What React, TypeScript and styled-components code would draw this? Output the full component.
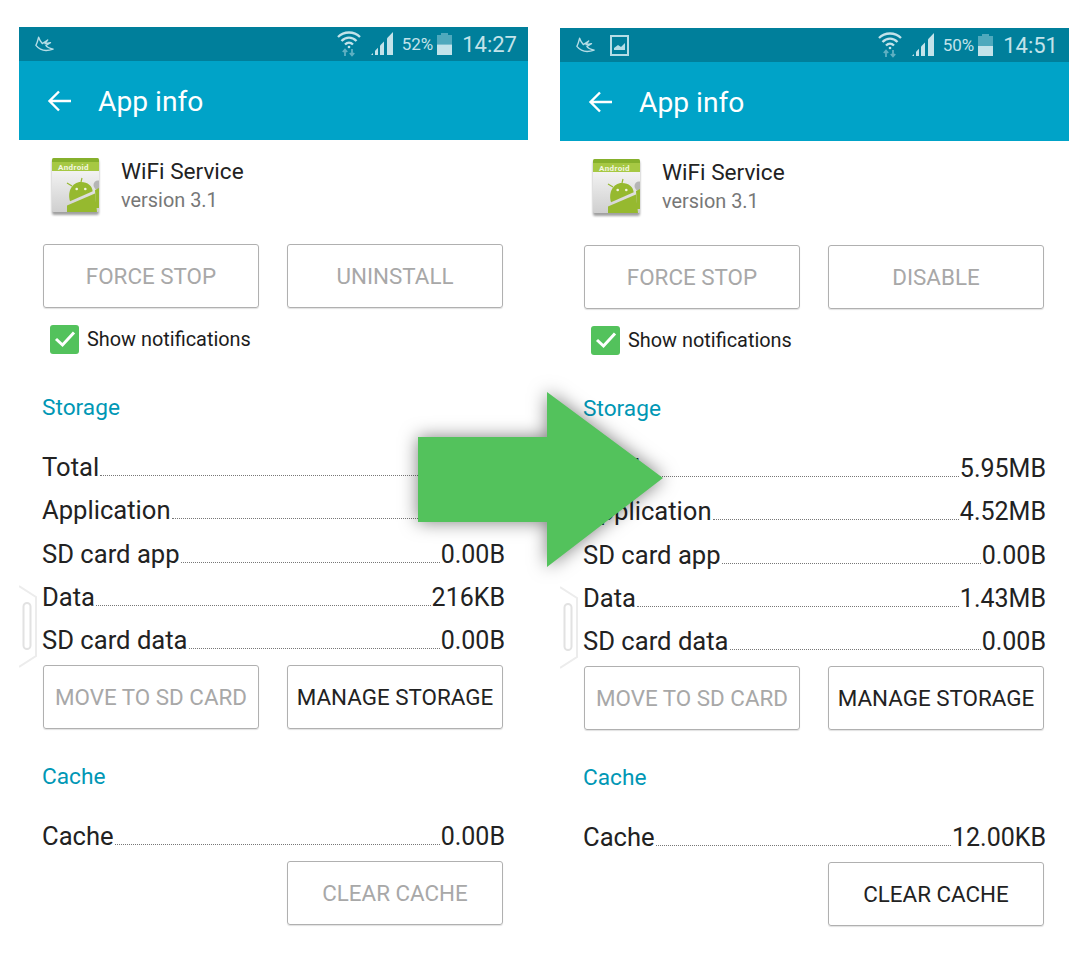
import React from 'react';
import styled, { createGlobalStyle } from 'styled-components';

const GlobalStyle = createGlobalStyle`
  html, body {
    margin: 0;
    padding: 0;
    background: #fff;
    font-family: Roboto, "Liberation Sans", sans-serif;
  }
`;

type PhoneData = {
  batteryText: string;
  battery: number;
  time: string;
  hasGalleryIcon?: boolean;
  secondButton: string;
  sizes: string[];
  cache: string;
  cacheEnabled?: boolean;
  offset: number;
};

const phones: PhoneData[] = [
  {
    batteryText: '52%',
    battery: 52,
    time: '14:27',
    secondButton: 'UNINSTALL',
    sizes: ['5.95MB', '4.52MB', '0.00B', '216KB', '0.00B'],
    cache: '0.00B',
    offset: 0,
  },
  {
    batteryText: '50%',
    battery: 50,
    time: '14:51',
    hasGalleryIcon: true,
    secondButton: 'DISABLE',
    sizes: ['5.95MB', '4.52MB', '0.00B', '1.43MB', '0.00B'],
    cache: '12.00KB',
    cacheEnabled: true,
    offset: 1,
  },
];

const rowLabels = ['Total', 'Application', 'SD card app', 'Data', 'SD card data'];

const SwallowIcon = () => (
  <svg width="20" height="17" viewBox="0 0 22 18" fill="none" stroke="#b5dde6" strokeWidth="1.5" strokeLinejoin="round">
    <path d="M4 1 C3 5 2 8 1 10 C5 15 12 17 20 14 C15 13 13 12 12 10 L17 7 L11 8 L14 4 L8 8 C6 6 5 4 4 1 Z" />
  </svg>
);

const GalleryIcon = () => (
  <svg width="19" height="21" viewBox="0 0 19 21">
    <rect x="1" y="1" width="17" height="19" fill="none" stroke="#b5dde6" strokeWidth="2" />
    <path d="M4 15 L4 13 L8 10 L11 12 L15 8 L15 15 Z" fill="#b5dde6" />
  </svg>
);

const WifiIcon = () => (
  <svg width="24" height="26" viewBox="0 0 24 26" fill="none" stroke="#c3e3ea" strokeWidth="2.3">
    <path d="M1 6 C7 0 17 0 23 6" />
    <path d="M4.5 10 C9 5.5 15 5.5 19.5 10" />
    <path d="M8 13.5 C10.5 11 13.5 11 16 13.5" />
    <circle cx="12" cy="16" r="1.3" fill="#c3e3ea" stroke="none" />
    <path d="M8 25 V19 M5.8 21 L8 18.6 L10.2 21" stroke="#5fb0c2" strokeWidth="1.8" />
    <path d="M15 18 V24 M12.8 22 L15 24.4 L17.2 22" stroke="#5fb0c2" strokeWidth="1.8" />
  </svg>
);

const SignalIcon = () => (
  <svg width="25" height="24" viewBox="0 0 25 24" fill="#c3e3ea">
    <polygon points="1,23 3,21 3,23" />
    <polygon points="5,18.8 8,15.7 8,23 5,23" />
    <polygon points="10,13.6 14,9.4 14,23 10,23" />
    <polygon points="17,6.3 23,0 23,23 17,23" />
  </svg>
);

const BatteryIcon = ({ level }: { level: number }) => (
  <svg width="15" height="22" viewBox="0 0 15 22">
    <rect x="4" y="0" width="7" height="3" fill="#4fa9bd" />
    <rect x="0" y="2" width="15" height="20" fill="#4fa9bd" />
    <rect x="0" y={22 - (20 * level) / 100} width="15" height={(20 * level) / 100} fill="#c3e3ea" />
  </svg>
);

const BackIcon = () => (
  <svg width="24" height="24" viewBox="0 0 24 24" fill="none" stroke="#fff" strokeWidth="2.4">
    <path d="M24 12 H2.5 M12 2.5 L2.5 12 L12 21.5" />
  </svg>
);

const AndroidAppIcon = () => (
  <svg width="52" height="60" viewBox="0 0 52 60">
    <defs>
      <linearGradient id="paper" x1="0" y1="0" x2="0" y2="1">
        <stop offset="0" stopColor="#fdfdfd" />
        <stop offset="1" stopColor="#cfcfcf" />
      </linearGradient>
      <clipPath id="iconClip">
        <rect x="2" y="0" width="47" height="54" rx="1.5" />
      </clipPath>
      <filter id="iconShadow" x="-20%" y="-20%" width="140%" height="140%">
        <feGaussianBlur stdDeviation="1.2" />
      </filter>
    </defs>
    <rect x="2" y="2" width="47" height="55" rx="2" fill="#555" opacity="0.55" filter="url(#iconShadow)" />
    <g clipPath="url(#iconClip)">
      <rect x="2" y="0" width="47" height="54" fill="url(#paper)" />
      <rect x="2" y="0" width="47" height="4" fill="#86b02c" />
      <rect x="2" y="4" width="47" height="9" fill="#a6c843" />
      <text x="8" y="11.5" fontSize="8" fontWeight="700" letterSpacing="0.4" fill="#f3f7e2" fontFamily="Roboto, sans-serif">Android</text>
      <circle cx="48" cy="27" r="4.5" fill="#b5b5b5" />
      <path d="M22 28 L17 25 M31 24 L32 20" stroke="#96b92f" strokeWidth="1.2" />
      <path d="M20 43.3 C17 34 22 24 31 24 C38 24 42 28 42.7 33.3 Z" fill="#96b92f" />
      <circle cx="26.7" cy="31" r="1.3" fill="#f2f5df" />
      <circle cx="35.3" cy="31" r="1.3" fill="#f2f5df" />
      <polygon points="17,47.5 45,35.5 47,54 17,54" fill="#96b92f" />
      <polygon points="45,32 49,30 49,50 46,50" fill="#96b92f" />
    </g>
  </svg>
);

const SideHandle = () => (
  <svg width="20" height="86" viewBox="0 0 20 86" fill="none">
    <path d="M0 1 L17 12 V71 L0 82" stroke="#ececec" strokeWidth="2" />
    <rect x="4.5" y="18" width="7" height="46" rx="3.5" stroke="#e2e2e2" strokeWidth="2" />
  </svg>
);

const Phone: React.FC<{ data: PhoneData }> = ({ data }) => (
  <PhoneFrame $offset={data.offset}>
    <StatusBar>
      <StatusLeft>
        <SwallowIcon />
        {data.hasGalleryIcon && <GalleryIcon />}
      </StatusLeft>
      <StatusRight>
        <WifiIcon />
        <SignalIcon />
        <BatteryText>{data.batteryText}</BatteryText>
        <BatteryIcon level={data.battery} />
        <ClockText>{data.time}</ClockText>
      </StatusRight>
    </StatusBar>
    <Header>
      <BackIcon />
      <HeaderTitle>App info</HeaderTitle>
    </Header>
    <HandleSlot>
      <SideHandle />
    </HandleSlot>
    <Content>
      <AppRow>
        <AndroidAppIcon />
        <AppText>
          <AppName>WiFi Service</AppName>
          <AppVersion>version 3.1</AppVersion>
        </AppText>
      </AppRow>
      <ButtonRow>
        <OutlineButton>FORCE STOP</OutlineButton>
        <OutlineButton>{data.secondButton}</OutlineButton>
      </ButtonRow>
      <NotifyRow>
        <CheckBox>
          <svg width="22" height="18" viewBox="0 0 22 18" fill="none" stroke="#fff" strokeWidth="3">
            <path d="M2 9 L8.5 15 L20 2.5" />
          </svg>
        </CheckBox>
        <NotifyText>Show notifications</NotifyText>
      </NotifyRow>
      <SectionTitle>Storage</SectionTitle>
      <Rows>
        {rowLabels.map((label, i) => (
          <Row key={label}>
            <span>{label}</span>
            <Dots />
            <RowValue>{data.sizes[i]}</RowValue>
          </Row>
        ))}
      </Rows>
      <ButtonRow $tight>
        <OutlineButton>MOVE TO SD CARD</OutlineButton>
        <OutlineButton $active>MANAGE STORAGE</OutlineButton>
      </ButtonRow>
      <SectionTitle $cache>Cache</SectionTitle>
      <Rows>
        <Row>
          <span>Cache</span>
          <Dots />
          <RowValue>{data.cache}</RowValue>
        </Row>
      </Rows>
      <CacheButtonRow>
        <OutlineButton $active={data.cacheEnabled}>CLEAR CACHE</OutlineButton>
      </CacheButtonRow>
    </Content>
  </PhoneFrame>
);

const App: React.FC = () => (
  <Page>
    <GlobalStyle />
    {phones.map((p) => (
      <Phone key={p.time} data={p} />
    ))}
    <BigArrow width="285" height="215" viewBox="0 0 285 215">
      <polygon points="20,65 149,65 149,20 265,106 149,195 149,150 20,150" fill="#53c25c" />
    </BigArrow>
  </Page>
);

const Page = styled.div`
  position: relative;
  width: 1080px;
  height: 960px;
  box-sizing: border-box;
  padding: 27px 0 0 19px;
  display: flex;
  align-items: flex-start;
  gap: 32px;
  overflow: hidden;
`;

const PhoneFrame = styled.div<{ $offset: number }>`
  position: relative;
  width: 509px;
  margin-top: ${(p) => p.$offset}px;
  flex-shrink: 0;
`;

const StatusBar = styled.div`
  height: 34px;
  background: #007f9b;
  display: flex;
  align-items: center;
  justify-content: space-between;
  padding: 0 11px 0 16px;
`;

const StatusLeft = styled.div`
  display: flex;
  align-items: center;
  gap: 14px;
`;

const StatusRight = styled.div`
  display: flex;
  align-items: center;
  color: #c3e3ea;

  svg:nth-child(2) {
    margin-left: 9px;
  }
`;

const BatteryText = styled.span`
  font-size: 17px;
  margin: 0 4px 0 7px;
`;

const ClockText = styled.span`
  font-size: 22px;
  margin-left: 10px;
`;

const Header = styled.div`
  height: 79px;
  background: #00a3c8;
  display: flex;
  align-items: center;
  padding-left: 28px;
  box-sizing: border-box;
`;

const HeaderTitle = styled.div`
  color: #fff;
  font-size: 28.2px;
  line-height: 34px;
  padding-top: 2px;
  margin-left: 27px;
`;

const HandleSlot = styled.div`
  position: absolute;
  left: 0;
  top: 558px;
`;

const Content = styled.div`
  padding: 18px 23px 0 23px;
`;

const AppRow = styled.div`
  display: flex;
  padding-left: 8px;
  height: 60px;
`;

const AppText = styled.div`
  margin-left: 19px;
`;

const AppName = styled.div`
  font-size: 22.6px;
  line-height: 28px;
  color: #222;
`;

const AppVersion = styled.div`
  font-size: 19.9px;
  line-height: 30px;
  color: #777;
`;

const ButtonRow = styled.div<{ $tight?: boolean }>`
  display: flex;
  gap: 28px;
  padding: 0 2px 0 1px;
  margin-top: ${(p) => (p.$tight ? '3px' : '26px')};
`;

const CacheButtonRow = styled.div`
  display: flex;
  justify-content: flex-end;
  padding-right: 2px;
  margin-top: 2px;
`;

const OutlineButton = styled.div<{ $active?: boolean }>`
  width: 216px;
  height: 64px;
  box-sizing: border-box;
  border: 1px solid #b0b0b0;
  border-radius: 3px;
  box-shadow: 0 1px 1px rgba(0, 0, 0, 0.12);
  display: flex;
  align-items: center;
  justify-content: center;
  font-size: 22.4px;
  white-space: nowrap;
  color: ${(p) => (p.$active ? '#222' : '#a8a8a8')};
`;

const NotifyRow = styled.div`
  display: flex;
  align-items: center;
  height: 30px;
  margin: 16px 0 0 8px;
`;

const CheckBox = styled.div`
  width: 29px;
  height: 29px;
  border-radius: 3px;
  background: #53c25c;
  display: flex;
  align-items: center;
  justify-content: center;
`;

const NotifyText = styled.div`
  font-size: 19.9px;
  color: #1c1c1c;
  margin-left: 8px;
`;

const SectionTitle = styled.div<{ $cache?: boolean }>`
  font-size: 22.7px;
  line-height: 28px;
  color: #0097b5;
  margin-top: ${(p) => (p.$cache ? '34px' : '40px')};
`;

const Rows = styled.div`
  margin-top: 24px;
`;

const Row = styled.div`
  display: flex;
  align-items: baseline;
  height: 43.3px;
  line-height: 43.3px;
  font-size: 25.6px;
  color: #222;
`;

const RowValue = styled.span`
  font-size: 25px;
`;

const Dots = styled.div`
  flex: 1;
  border-bottom: 1px dotted #777;
  margin: 0 1px -2px;
`;

const BigArrow = styled.svg`
  position: absolute;
  left: 398px;
  top: 372px;
  filter: drop-shadow(0 0 9px rgba(0, 0, 0, 0.5));
`;

export default App;
